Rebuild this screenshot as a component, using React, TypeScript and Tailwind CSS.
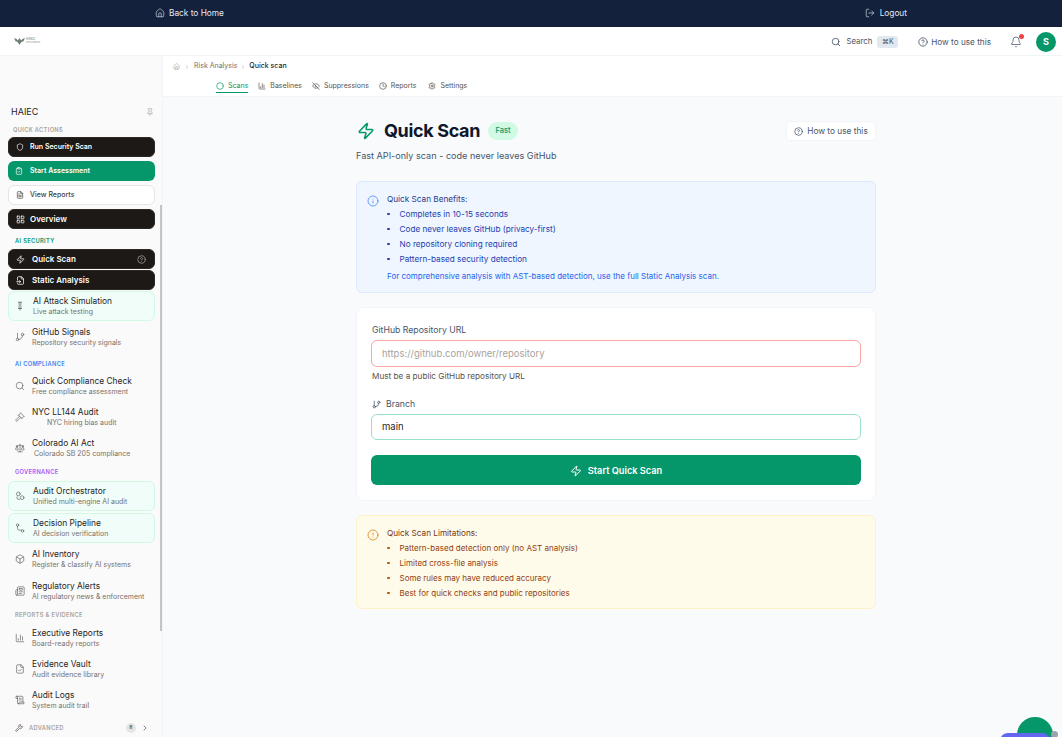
import { Home, LogOut, Search, CircleHelp, Bell, Pin, Shield, ClipboardCheck, FileText, LayoutGrid, Zap, FileInput, GitBranch, Scale, Gavel, Box, Newspaper, BarChart3, FileCheck, ScrollText, Wrench, ChevronRight, Info, CircleAlert, Circle, EyeOff, Clock, Settings } from "lucide-react";
import type { ComponentType, ReactNode } from "react";

type IconT = ComponentType<{ className?: string; strokeWidth?: number }>;

function Base({ className, strokeWidth, children }: { className?: string; strokeWidth?: number; children: ReactNode }) {
  return (
    <svg viewBox="0 0 24 24" fill="none" stroke="currentColor" strokeWidth={strokeWidth ?? 2} strokeLinecap="round" strokeLinejoin="round" className={className}>
      {children}
    </svg>
  );
}
const AttackIcon: IconT = (p) => (
  <Base {...p}><path d="M8 3h8M10 3v15M14 3v15M8 18h8M12 18v4" /></Base>
);
const OrchestratorIcon: IconT = (p) => (
  <Base {...p}><circle cx="8" cy="7" r="4.500" /><circle cx="17" cy="16" r="4.500" /><path d="M5 14v3a3 3 0 0 0 3 3h3" /></Base>
);
const PipelineIcon: IconT = (p) => (
  <Base {...p}><circle cx="6" cy="5" r="3" /><circle cx="18" cy="19" r="3" /><path d="M6 8v5a4 4 0 0 0 4 4h5" /></Base>
);

function Dark({ icon: I, label, big, help, gap }: { icon: IconT; label: string; big?: boolean; help?: boolean; gap?: string }) {
  return (
    <div className={`flex h-5 items-center rounded-md border border-[#2a2725] bg-[#1c1917] pl-[7px] pr-[8px] font-semibold text-white ${big ? "text-[8px]" : "text-[7px]"}`}>
      <I className={`${gap ?? "mr-[6px]"} ${big ? "h-[9px] w-[9px]" : "h-2 w-2"}`} />
      <span className={big ? "" : "pt-[1px]"}>{label}</span>
      {help && <CircleHelp className="ml-auto h-[9px] w-[9px] text-[#a8a29e]" />}
    </div>
  );
}

function Heading({ children, color, mt, pl }: { children: ReactNode; color: string; mt: string; pl?: string }) {
  return <div className={`text-[5.700px] font-semibold leading-[8px] tracking-[0.06em] ${pl ?? "pl-[7px]"} ${color} ${mt}`}>{children}</div>;
}

function Item({ icon: I, title, sub, glow, indent }: { icon: IconT; title: string; sub: string; glow?: boolean; indent?: string }) {
  return (
    <div className={`flex h-[30px] items-center rounded-md border pl-[6px] ${glow ? "border-[#d1fae5] bg-[#f0fdf8]" : "border-transparent"}`}>
      <I className={`${glow ? "mr-[8px]" : "mr-[7px]"} h-[10px] w-[10px] shrink-0 text-[#57534e]`} strokeWidth={1.5} />
      <div className="min-w-0">
        <div className="whitespace-nowrap text-[8.400px] leading-[12px] text-[#292524]">{title}</div>
        <div className={`whitespace-nowrap text-[7px] leading-[10px] text-[#78716c] ${indent ?? ""}`}>{sub}</div>
      </div>
    </div>
  );
}

function Tab({ icon: I, label, active, extra }: { icon: IconT; label: string; active?: boolean; extra?: string }) {
  return (
    <div className={`flex h-[13px] items-center gap-[4px] border-b ${active ? "border-[#059669] text-[#059669]" : "border-transparent text-[#57534e]"} ${extra ?? ""}`}>
      <I className="h-2 w-2" />
      <span>{label}</span>
    </div>
  );
}

function Bullets({ items, dot, size }: { items: string[]; dot: string; size: string }) {
  return (
    <ul className={`mt-[5px] flex flex-col gap-[5px] ${size}`}>
      {items.map((t) => (
        <li key={t} className="flex h-[10px] items-center leading-[10px]">
          <span className={`mr-[10px] h-[2.500px] w-[2.500px] rounded-full ${dot}`} />
          {t}
        </li>
      ))}
    </ul>
  );
}

export default function App() {
  return (
    <div className="relative flex h-[737px] flex-col overflow-hidden bg-[#f8fafc] font-['Inter',sans-serif]">
      <div className="flex h-[27px] shrink-0 items-center justify-between bg-[#14213d] pb-[1px] px-[155px] text-[8.300px] text-[#e2e8f0]">
        <div className="flex items-center gap-[4px]"><Home className="h-[10px] w-[10px]" strokeWidth={1.5} />Back to Home</div>
        <div className="flex items-center gap-[5px]"><LogOut className="h-[10px] w-[10px]" strokeWidth={1.5} />Logout</div>
      </div>
      <div className="flex h-[29px] shrink-0 items-center border-b border-[#f1f5f9] bg-white pl-[14px] pr-[6px]">
        <svg width="11" height="8" viewBox="0 0 13 9" className="text-[#6b7f72]"><path d="M0 1l3 1 1.500 2L6.500 1 8.500 4 10 2l3-1-2 4-2 .5L6.500 9 4 5.500 2 5z" fill="currentColor" /></svg>
        <div className="ml-[1px] text-[3px] font-semibold leading-[3px] text-[#8a8f8c]">HAIEC<div className="text-[2px] font-normal">INTELLIGENCE</div></div>
        <div className="ml-auto flex items-center pt-[2px] text-[8.200px] text-[#475569]">
          <Search className="mr-[5px] h-[10px] w-[10px]" />
          <span className="text-[7.800px]">Search</span>
          <span className="ml-[5px] flex h-3 w-[21px] items-center justify-center rounded-[3px] bg-[#e2e8f0] text-[7px]">⌘K</span>
          <CircleHelp className="ml-[20px] mr-[3px] h-[10px] w-[10px]" />
          <span>How to use this</span>
          <div className="relative ml-[19px] mr-[14px]">
            <Bell className="h-3 w-3" strokeWidth={1.5} />
            <span className="absolute -right-[2px] -top-[2px] h-[5px] w-[5px] rounded-full bg-[#ef4444]" />
          </div>
          <div className="flex h-5 w-5 items-center justify-center rounded-full bg-[#059669] text-[9px] font-bold text-white">S</div>
        </div>
      </div>
      <div className="flex min-h-0 flex-1">
        <aside className="relative w-[163px] shrink-0 overflow-hidden border-r border-[#f1f5f9] bg-[#fafafa] pl-2 pr-[7px] pt-[50px]">
          <div className="absolute right-0 top-[149px] h-[426px] w-[2px] bg-[#c4c4c4]" />
          <div className="flex h-3 items-center justify-between pl-[3px] pr-[1px] text-[9px] text-[#292524]">HAIEC<Pin className="h-2 w-2 text-[#a8a29e]" /></div>
          <Heading color="text-[#a8a29e]" mt="mt-[8px]" pl="pl-[5px]">QUICK ACTIONS</Heading>
          <div className="mt-[3px] flex flex-col gap-1">
            <Dark icon={Shield} label="Run Security Scan" gap="mr-[6px]" />
            <div className="flex h-5 items-center rounded-md bg-[#059669] pl-[7px] text-[7px] font-semibold text-white"><ClipboardCheck className="mr-[7px] h-2 w-2" /><span className="pt-[1px]">Start Assessment</span></div>
            <div className="flex h-5 items-center rounded-md border border-[#e7e5e4] bg-white pl-[7px] text-[7px] font-medium text-[#44403c]"><FileText className="mr-[6px] h-2 w-2" /><span className="pt-[1px]">View Reports</span></div>
            <Dark icon={LayoutGrid} label="Overview" big gap="mr-[5px]" />
          </div>
          <Heading color="text-[#059669]" mt="mt-2">AI SECURITY</Heading>
          <div className="mt-[4px] flex flex-col gap-[1px]">
            <Dark icon={Zap} label="Quick Scan" big help gap="mr-[7px]" />
            <Dark icon={FileInput} label="Static Analysis" big gap="mr-[7px]" />
            <Item icon={AttackIcon} title="AI Attack Simulation" sub="Live attack testing" glow />
            <Item icon={GitBranch} title="GitHub Signals" sub="Repository security signals" />
          </div>
          <Heading color="text-[#3b82f6]" mt="mt-[8px]">AI COMPLIANCE</Heading>
          <div className="mt-[3px] flex flex-col gap-[1px]">
            <Item icon={Search} title="Quick Compliance Check" sub="Free compliance assessment" />
            <Item icon={Gavel} title="NYC LL144 Audit" sub="NYC hiring bias audit" indent="pl-[15px]" />
            <Item icon={Scale} title="Colorado AI Act" sub="Colorado SB 205 compliance" indent="pl-[2px]" />
          </div>
          <Heading color="text-[#a855f7]" mt="mt-[5px]">GOVERNANCE</Heading>
          <div className="mt-[5px] flex flex-col gap-[1.600px]">
            <Item icon={OrchestratorIcon} title="Audit Orchestrator" sub="Unified multi-engine AI audit" glow />
            <Item icon={PipelineIcon} title="Decision Pipeline" sub="AI decision verification" glow />
            <Item icon={Box} title="AI Inventory" sub="Register & classify AI systems" />
            <Item icon={Newspaper} title="Regulatory Alerts" sub="AI regulatory news & enforcement" />
          </div>
          <Heading color="text-[#a8a29e]" mt="mt-[5px]">REPORTS &amp; EVIDENCE</Heading>
          <div className="mt-[4px] flex flex-col gap-[1px]">
            <Item icon={BarChart3} title="Executive Reports" sub="Board-ready reports" />
            <Item icon={FileCheck} title="Evidence Vault" sub="Audit evidence library" />
            <Item icon={ScrollText} title="Audit Logs" sub="System audit trail" />
          </div>
          <div className="mt-[7px] flex h-3 items-center pl-[7px] text-[5.700px] font-semibold tracking-[0.06em] text-[#a8a29e]">
            <Wrench className="mr-[6px] h-2 w-2 text-[#57534e]" />ADVANCED
            <span className="ml-auto flex h-[10px] w-[10px] items-center justify-center rounded-full bg-[#e7e5e4] text-[5px] text-[#57534e]">8</span>
            <ChevronRight className="ml-[5px] mr-[6px] h-2 w-2 text-[#57534e]" />
          </div>
        </aside>
        <main className="min-w-0 flex-1">
          <div className="h-[41px] border-b border-[#f1f5f9] bg-white">
            <div className="flex h-5 items-center pl-[10px] pt-[1px] text-[7px] text-[#78716c]">
              <Home className="h-[7px] w-[7px] text-[#a8a29e]" />
              <ChevronRight className="mx-[4px] h-[6px] w-[6px] text-[#a8a29e]" />
              <span>Risk Analysis</span>
              <ChevronRight className="mx-[3px] h-[6px] w-[6px] text-[#a8a29e]" />
              <span className="font-medium text-[#292524]">Quick scan</span>
            </div>
            <div className="flex items-center gap-[10px] pl-[53px] pt-[4px] text-[7px]">
              <Tab icon={Circle} label="Scans" active />
              <Tab icon={BarChart3} label="Baselines" />
              <Tab icon={EyeOff} label="Suppressions" />
              <Tab icon={Clock} label="Reports" />
              <Tab icon={Settings} label="Settings" extra="ml-[2px]" />
            </div>
          </div>
          <div className="ml-[193px] w-[520px] pt-[22px]">
            <div className="flex h-[24px] items-center">
              <Zap className="ml-[1px] h-[18px] w-[18px] text-[#059669]" strokeWidth={2} />
              <h1 className="ml-[9px] text-[18px] font-bold leading-[24px] tracking-[-0.02em] text-[#0f172a]">Quick Scan</h1>
              <span className="ml-[8px] flex h-[18px] w-[30px] items-center justify-center rounded-full bg-[#d1fae5] text-[7.500px] font-medium text-[#059669]">Fast</span>
              <div className="ml-auto flex h-5 w-[90px] items-center justify-center gap-[4px] rounded-[4px] border border-[#f1f5f9] bg-white text-[8.300px] text-[#475569]"><CircleHelp className="h-[9px] w-[9px]" />How to use this</div>
            </div>
            <p className="mt-[6px] text-[9.100px] leading-[14px] text-[#475569]">Fast API-only scan - code never leaves GitHub</p>
            <div className="mt-[18px] flex h-[112px] rounded-md border border-[#dbeafe] bg-[#eff6ff] pl-[10px] pt-[12px] text-[#1e40af]">
              <Info className="mr-[8px] mt-[1px] h-3 w-3 shrink-0 text-[#3b82f6]" strokeWidth={1.5} />
              <div>
                <div className="text-[8.200px] leading-[10px] text-[#1e3a8a]">Quick Scan Benefits:</div>
                <Bullets size="text-[8.200px]" dot="bg-[#1e40af]" items={["Completes in 10-15 seconds", "Code never leaves GitHub (privacy-first)", "No repository cloning required", "Pattern-based security detection"]} />
                <div className="mt-[7px] text-[8px] leading-[10px] text-[#2563eb]">For comprehensive analysis with AST-based detection, use the full Static Analysis scan.</div>
              </div>
            </div>
            <div className="mt-[14px] h-[194px] rounded-lg border border-[#f1f5f9] bg-white px-[14px] pt-[16px]">
              <div className="pl-[1px] text-[8.700px] leading-[12px] text-[#475569]">GitHub Repository URL</div>
              <div className="mt-[4px] flex h-[27px] items-center rounded-md border border-[#fca5a5] pl-[10px] pt-[1px] text-[9.500px] text-[#a8a29e]">https://github.com/owner/repository</div>
              <div className="mt-[3px] pl-[1px] text-[8.200px] leading-[12px] text-[#57534e]">Must be a public GitHub repository URL</div>
              <div className="mt-[16px] flex items-center pl-[1px] text-[8.700px] leading-[12px] text-[#475569]"><GitBranch className="mr-[5px] h-[9px] w-[9px]" />Branch</div>
              <div className="mt-[4px] flex h-[26px] items-center rounded-md border border-[#99e0c8] pl-[10px] pt-[1px] text-[9.500px] text-[#292524]">main</div>
              <div className="mt-[15px] flex h-[30px] items-center justify-center gap-[6px] rounded-md bg-[#059669] pt-[1px] text-[9.200px] font-semibold text-white"><Zap className="h-3 w-3" />Start Quick Scan</div>
            </div>
            <div className="mt-[14px] flex h-[94px] rounded-md border border-[#fef3c7] bg-[#fffbeb] pl-[10px] pt-[12px] text-[#92400e]">
              <CircleAlert className="mr-[8px] mt-[1px] h-3 w-3 shrink-0 text-[#d97706]" strokeWidth={1.5} />
              <div>
                <div className="text-[8.200px] leading-[10px] text-[#78350f]">Quick Scan Limitations:</div>
                <Bullets size="text-[8px]" dot="bg-[#b45309]" items={["Pattern-based detection only (no AST analysis)", "Limited cross-file analysis", "Some rules may have reduced accuracy", "Best for quick checks and public repositories"]} />
              </div>
            </div>
          </div>
        </main>
      </div>
      <div className="absolute left-[1017px] top-[717px] h-9 w-9 rounded-full bg-[#059669]" />
      <div className="absolute left-[1000px] top-[733px] h-4 w-[50px] rounded-full bg-[#6366f1]" />
      <div className="absolute left-[1051px] top-[731px] h-[7px] w-[7px] rounded-full bg-[#9ca3af]" />
    </div>
  );
}
